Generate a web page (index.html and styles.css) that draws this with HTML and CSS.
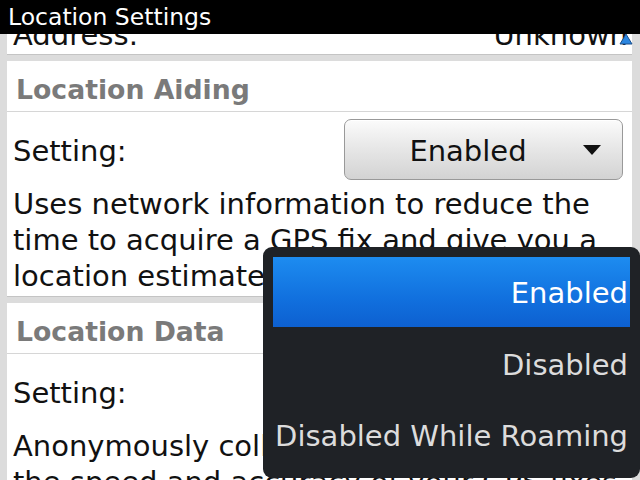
FILE: index.html
```html
<!DOCTYPE html>
<html lang="en">
<head>
    <meta charset="UTF-8" />
    <meta name="viewport" content="width=device-width, initial-scale=1.0"/>
    <title>Location Settings</title>
    <link rel="stylesheet" href="styles.css">
</head>
<body>
    <div class="screen">
        <div class="titlebar">Location Settings</div>

        <div class="content">
            <div class="panel panel-scrolled">
                <div class="row">
                    <span>Address:</span>
                    <span>Unknown</span>
                </div>
            </div>

            <div class="panel">
                <div class="panel-header">Location Aiding</div>
                <div class="row setting-row">
                    <span class="setting-label">Setting:</span>
                    <div class="choice">
                        <span class="choice-label">Enabled</span>
                        <span class="choice-arrow"></span>
                    </div>
                </div>
                <p class="desc">Uses network information to reduce the time to acquire a GPS fix and give you a location estimate faster.</p>
            </div>

            <div class="panel">
                <div class="panel-header">Location Data</div>
                <div class="row setting-row">
                    <span class="setting-label">Setting:</span>
                    <div class="choice">
                        <span class="choice-label">Enabled</span>
                        <span class="choice-arrow"></span>
                    </div>
                </div>
                <p class="desc">Anonymously collect location data about the speed and accuracy of your GPS fixes to help improve location services.</p>
            </div>
        </div>

        <!-- scroll indicator -->
        <svg class="scroll-up" width="14" height="12" viewBox="0 0 14 12">
            <polygon points="7,1 13,11 1,11" fill="#2b86e0" stroke="#1a4f8c" stroke-width="1"/>
        </svg>

        <!-- open dropdown -->
        <div class="menu">
            <div class="menu-item selected">Enabled</div>
            <div class="menu-item">Disabled</div>
            <div class="menu-item">Disabled While Roaming</div>
        </div>
    </div>
</body>
</html>
```

FILE: styles.css
```css
body {
    margin: 0;
    font-family: "DejaVu Sans", "Liberation Sans", sans-serif;
    background-color: #dcdcdc;
}
.screen {
    position: relative;
    width: 640px;
    height: 480px;
    overflow: hidden;
    display: flex;
    flex-direction: column;
    background-color: #dcdcdc;
}
.titlebar {
    height: 34px;
    line-height: 34px;
    padding-left: 8px;
    background-color: #000;
    color: #fff;
    font-size: 23.5px;
    position: relative;
    z-index: 2;
}
.content {
    flex: 1;
    overflow: hidden;
}
.panel {
    background-color: #fff;
    margin: 0 8px 6px 7px;
    border-bottom: 1px solid #c4c4c4;
}
.panel-scrolled {
    margin-top: -17px;
    padding-bottom: 1px;
}
.panel-scrolled .row {
    padding-right: 4px;
}
.panel-header {
    padding: 7px 9px 0 9px;
    line-height: 43px;
    font-size: 26.7px;
    font-weight: bold;
    color: #7a7a7a;
    border-bottom: 1px solid #d6d6d6;
}
.row {
    display: flex;
    justify-content: space-between;
    align-items: center;
    padding: 0 9px 0 6px;
    font-size: 29px;
    line-height: 36px;
    color: #111;
}
.setting-row {
    padding-top: 7px;
}
.setting-label {
    padding-top: 3px;
}
.choice {
    width: 277px;
    height: 59px;
    display: flex;
    align-items: center;
    border: 1px solid #999;
    border-radius: 7px;
    background: linear-gradient(#fbfbfb, #e6e6e6 50%, #d3d3d3);
    box-shadow: inset 0 1px 0 #fff;
}
.choice-label {
    flex: 1;
    text-align: center;
    padding-left: 8px;
    padding-top: 2px;
}
.choice-arrow {
    width: 0;
    height: 0;
    margin-right: 21px;
    border-left: 9px solid transparent;
    border-right: 9px solid transparent;
    border-top: 10px solid #111;
}
.desc {
    margin: 6px 0 0 0;
    padding: 0 9px 2px 6px;
    font-size: 29px;
    line-height: 36px;
    color: #111;
}
.scroll-up {
    position: absolute;
    left: 619px;
    top: 33px;
    z-index: 3;
}
.menu {
    position: absolute;
    left: 263px;
    top: 247px;
    right: 0;
    bottom: 2px;
    padding: 10px 10px 0 10px;
    background-color: #1f2226;
    border-radius: 9px;
    z-index: 4;
}
.menu-item {
    height: 71px;
    line-height: 74px;
    padding-right: 2px;
    text-align: right;
    font-size: 29px;
    color: #dcdcdc;
    white-space: nowrap;
}
.menu-item.selected {
    height: 70px;
    line-height: 73px;
    color: #fff;
    background: linear-gradient(#1d8cf0, #1170de 60%, #0d60d0);
}
.menu-item.selected + .menu-item {
    margin-top: 1px;
}
```
